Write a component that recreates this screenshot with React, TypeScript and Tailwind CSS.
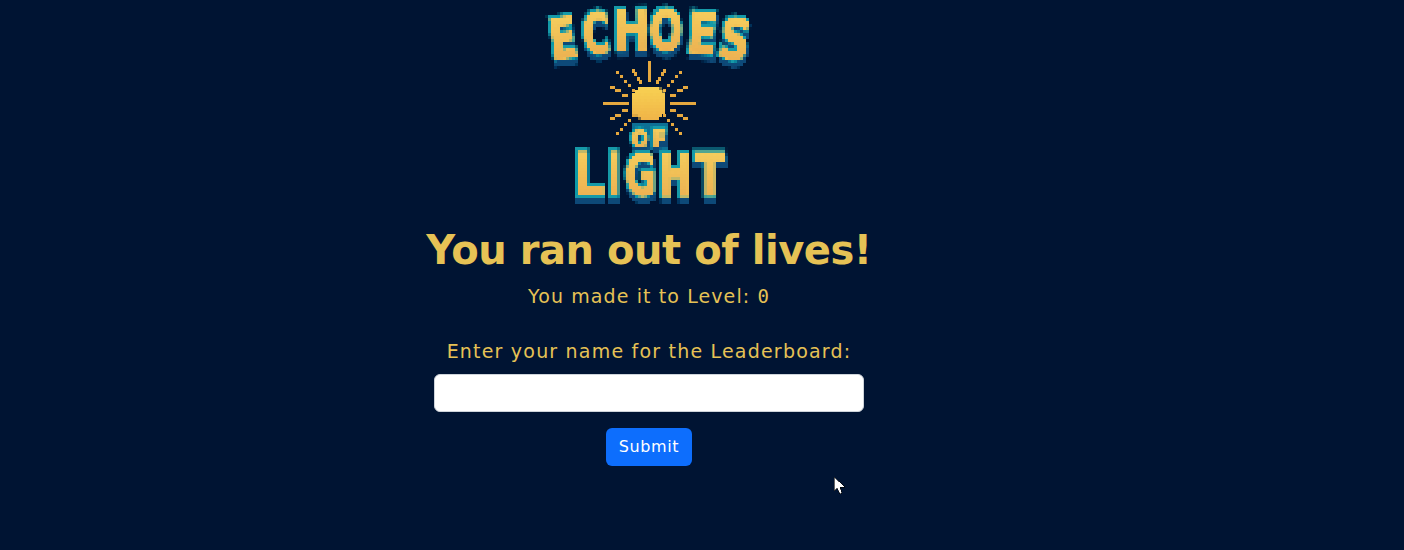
type L = { c: string; x: number; y: number; r: number; sx: number; sy: number; fs: number };

// x: ink centre, y: baseline inside the logo box
const letters: L[] = [
  { c: "E", x: 27, y: 59, r: -8, sx: 0.72, sy: 1.0, fs: 56 },
  { c: "C", x: 59, y: 54, r: -5, sx: 0.66, sy: 1.0, fs: 56 },
  { c: "H", x: 93, y: 51, r: -1, sx: 0.76, sy: 1.0, fs: 56 },
  { c: "O", x: 127, y: 51, r: 1, sx: 0.7, sy: 1.0, fs: 56 },
  { c: "E", x: 162, y: 54, r: 5, sx: 0.78, sy: 1.0, fs: 56 },
  { c: "S", x: 193, y: 60, r: 9, sx: 0.76, sy: 1.0, fs: 56 },
  { c: "O", x: 101, y: 148, r: 0, sx: 0.58, sy: 0.66, fs: 36 },
  { c: "F", x: 121, y: 148, r: 0, sx: 0.62, sy: 0.66, fs: 36 },
  { c: "L", x: 50, y: 196, r: 0, sx: 0.84, sy: 1.0, fs: 58 },
  { c: "I", x: 75, y: 196, r: 0, sx: 0.66, sy: 1.0, fs: 58 },
  { c: "G", x: 102, y: 197, r: 0, sx: 0.66, sy: 0.98, fs: 58 },
  { c: "H", x: 136, y: 197, r: 0, sx: 0.66, sy: 1.0, fs: 58 },
  { c: "T", x: 171, y: 197, r: 0, sx: 0.76, sy: 1.0, fs: 58 },
];

function Glyphs({ dx, dy, fill, stroke, sw }: { dx: number; dy: number; fill: string; stroke: string; sw: number }) {
  return (
    <>
      {letters.map((l, i) => (
        <text
          key={i}
          transform={`translate(${l.x + dx} ${l.y + dy}) rotate(${l.r}) scale(${l.sx} ${l.sy})`}
          textAnchor="middle"
          fontFamily="'DejaVu Sans', sans-serif"
          fontWeight="700"
          fontSize={l.fs}
          fill={fill}
          stroke={stroke}
          strokeWidth={sw}
          strokeLinejoin="miter"
          paintOrder="stroke"
        >
          {l.c}
        </text>
      ))}
    </>
  );
}

function Logo() {
  const ox = 110; // sun centre
  const oy = 104;
  const dots = [
    [-33, -32], [-29, -28], [-25, -23], [-21, -19], [-17, -14],
  ];
  const dashes = [
    [-39, -17, 5], [-34, -14, 6], [-27, -9, 6],
  ];
  const steep = [
    [-17, -34], [-15, -31], [-12, -26], [-10, -23],
  ];
  const quadrants = [
    [1, 1],
    [-1, 1],
    [1, -1],
    [-1, -1],
  ];

  return (
    <svg width="220" height="240" viewBox="0 -14 220 240" className="block" aria-label="Echoes of Light">
      <defs>
        <linearGradient id="goldFill" x1="0" y1="0" x2="0" y2="1">
          <stop offset="0" stopColor="#f6d35f" />
          <stop offset="1" stopColor="#eaa94e" />
        </linearGradient>
        <linearGradient id="sunFill" x1="0" y1="0" x2="0" y2="1">
          <stop offset="0" stopColor="#f8d253" />
          <stop offset="1" stopColor="#f0b548" />
        </linearGradient>
        <filter id="pixelate" filterUnits="userSpaceOnUse" x="0" y="-14" width="220" height="240">
          <feFlood x="1" y="-13" width="1" height="1" />
          <feComposite width="3" height="3" />
          <feTile result="grid" />
          <feComposite in="SourceGraphic" in2="grid" operator="in" />
          <feMorphology operator="dilate" radius="1" />
        </filter>
      </defs>

      {/* sun rays */}
      <g fill="#e5a83f" shapeRendering="crispEdges">
        <rect x={ox - 1} y={oy - 42} width="3" height="21" />
        <rect x={ox - 46} y={oy - 1} width="26" height="3" />
        <rect x={ox + 21} y={oy - 1} width="26" height="3" />
        {quadrants.map(([sx, sy]) => (
          <g key={`${sx}${sy}`} transform={`translate(${ox} ${oy}) scale(${sx} ${sy})`}>
            {dots.map(([x, y], i) => (
              <rect key={i} x={x} y={y} width="3" height="3" />
            ))}
            {dashes.map(([x, y, w], i) => (
              <rect key={i} x={x} y={y} width={w} height="3" />
            ))}
            {sy > 0 && steep.map(([x, y], i) => <rect key={i} x={x} y={y} width="3" height="4" />)}
          </g>
        ))}
      </g>

      <g filter="url(#pixelate)">
        {/* sun disc */}
        <polygon
          points={`${ox - 9},${oy - 17} ${ox + 9},${oy - 17} ${ox + 16},${oy - 10} ${ox + 16},${oy + 10} ${ox + 9},${oy + 16} ${ox - 9},${oy + 16} ${ox - 16},${oy + 10} ${ox - 16},${oy - 10}`}
          fill="url(#sunFill)"
        />

        {/* OF banner */}
        <rect x="93" y="123" width="17" height="28" fill="#0b6f95" />
        <rect x="112" y="123" width="18" height="28" fill="#0b6f95" />

        <Glyphs dx={0} dy={5} fill="#0a4a78" stroke="#0a4a78" sw={6} />
        <Glyphs dx={-1} dy={-1} fill="#129aa8" stroke="#129aa8" sw={6} />
        <Glyphs dx={0} dy={0} fill="url(#goldFill)" stroke="#f0c055" sw={1.6} />
      </g>
    </svg>
  );
}

function Cursor() {
  return (
    <svg
      width="14"
      height="20"
      viewBox="0 0 14 20"
      className="absolute left-[833px] top-[476px]"
      shapeRendering="crispEdges"
    >
      <path d="M1 1 V15 L4 12 L7 18 L9 17 L7 11 H12 Z" fill="#ffffff" stroke="#000000" strokeWidth="0.6" />
    </svg>
  );
}

export default function App() {
  return (
    <div className="relative h-[550px] w-[1404px] overflow-hidden bg-[#001433] font-['DejaVu_Sans',sans-serif]">
      <div className="flex w-[1298px] flex-col items-center">
        <div className="mt-[-15px]">
          <Logo />
        </div>
        <h1 className="mt-[1px] text-[40px] leading-[48px] font-bold tracking-[-0.45px] whitespace-nowrap text-[#e6c255]">
          You ran out of lives!
        </h1>
        <p className="mt-[8px] text-[19px] leading-[28px] tracking-[1.1px] whitespace-nowrap text-[#e6c255]">
          You made it to Level: <span className="font-['DejaVu_Sans_Mono',monospace]">0</span>
        </p>
        <label className="mt-[27px] text-[19px] leading-[28px] tracking-[1.2px] whitespace-nowrap text-[#e6c255]">
          Enter your name for the Leaderboard:
        </label>
        <input
          type="text"
          className="mt-[9px] h-[38px] w-[430px] rounded-md border border-[#ced4da] bg-white px-3"
        />
        <button
          type="button"
          className="mt-4 h-[38px] w-[86px] rounded-md bg-[#0d6efd] text-[16px] tracking-[0.6px] text-white"
        >
          Submit
        </button>
      </div>
      <Cursor />
    </div>
  );
}
